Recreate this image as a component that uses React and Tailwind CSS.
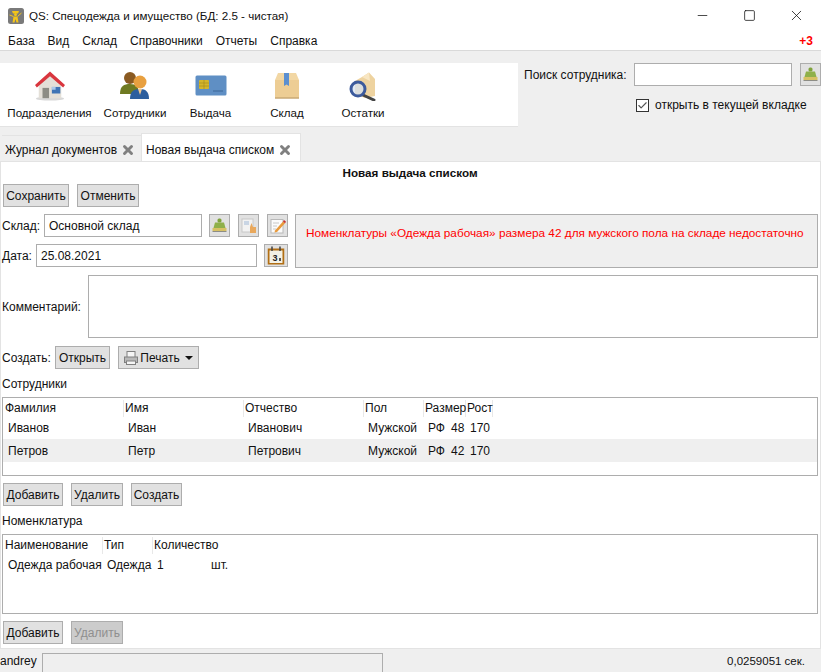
import { X, Minus, Square, Check } from 'lucide-react';

function HouseIcon() {
    return (
        <svg width="32" height="30" viewBox="0 0 34 32">
            <ellipse cx="17" cy="29.5" rx="15" ry="2" fill="#d8d8d8" />
            <path d="M5 14 L17 3 L29 14 V29 H5 Z" fill="#e4e0d8" />
            <path d="M1 15 L17 0.5 L33 15 L31 17.5 L17 5.5 L3 17.5 Z" fill="#d9363e" />
            <rect x="9" y="18" width="7" height="11" fill="#8c8c84" />
            <rect x="19" y="17" width="9" height="7" fill="#3f74b5" />
            <rect x="19" y="17" width="4" height="3" fill="#a9c8ea" />
        </svg>
    );
}

function PeopleIcon() {
    return (
        <svg width="30" height="30" viewBox="0 0 30 30">
            <path d="M0 23 C0 15 4 13 10 13 C16 13 19 16 19 23 Z" fill="#6f7a22" />
            <circle cx="10" cy="7" r="6" fill="#8a5a22" />
            <path d="M10 28 C10 20 14 18 20 18 C26 18 29 21 29 28 Z" fill="#2d5f9e" />
            <path d="M18 18 L20 24 L22 18 Z" fill="#f0c890" />
            <circle cx="20" cy="11" r="6.5" fill="#e8a040" />
        </svg>
    );
}

function CardIcon() {
    return (
        <svg width="32" height="22" viewBox="0 0 32 22">
            <rect x="0.5" y="0.5" width="31" height="20" rx="1.5" fill="#5f8fc4" />
            <rect x="4" y="5" width="10" height="9" rx="1" fill="#d4b62a" />
            <path d="M4 8 H14 M4 11 H14 M9 5 V14" stroke="#a78c1e" strokeWidth="0.7" />
            <path d="M18 16 H28" stroke="#3d6797" strokeWidth="1" />
        </svg>
    );
}

function BoxIcon() {
    return (
        <svg width="26" height="28" viewBox="0 0 26 28">
            <path d="M1 8 L4 1 H22 L25 8 V26 H1 Z" fill="#f2d7a4" />
            <path d="M1 8 H25 V26 H1 Z" fill="#edcd94" />
            <path d="M1 26 H25" stroke="#c9a875" strokeWidth="1.5" />
            <path d="M10 1 H15 V14 L12.5 12.5 L10 14 Z" fill="#5b8fd0" />
        </svg>
    );
}

function StockIcon() {
    return (
        <svg width="28" height="29" viewBox="0 0 28 29">
            <path d="M6 9 L13 5 L20 0.5 L26 7 V24 L16 26 L6 22 Z" fill="#eed3a0" />
            <path d="M13 5 L20 0.5 L21 9 Z" fill="#f8e6c2" />
            <path d="M14 23 L25 28" stroke="#444" strokeWidth="3" strokeLinecap="round" />
            <circle cx="9" cy="17" r="7" fill="#d5e2f2" fillOpacity="0.75" stroke="#3c5a9c" strokeWidth="3" />
        </svg>
    );
}

function BroomIcon() {
    return (
        <svg width="15" height="15" viewBox="0 0 15 15">
            <rect x="5.5" y="0.5" width="4" height="4" rx="1.5" fill="#7fa33c" />
            <path d="M3 4.5 H12 L13.5 10 H1.5 Z" fill="#8fb04a" />
            <rect x="0.5" y="10" width="14" height="3" fill="#d7c165" />
            <rect x="0.5" y="13" width="14" height="1" fill="#8d8d86" />
        </svg>
    );
}

function PickIcon() {
    return (
        <svg width="16" height="16" viewBox="0 0 16 16">
            <rect x="1" y="1" width="11" height="13" fill="#f2f2f2" stroke="#c8c8c8" />
            <rect x="3" y="3" width="5" height="4" fill="#c9d5e4" />
            <path d="M9 15 V9 L10.5 5 L12 9 H15 V15 Z" fill="#e9a85c" />
        </svg>
    );
}

function EditIcon() {
    return (
        <svg width="16" height="16" viewBox="0 0 16 16">
            <rect x="1" y="1.5" width="12" height="13.5" fill="#fbfbfb" stroke="#b9b9b9" />
            <path d="M3 5 H9 M3 8 H7 M3 11 H6" stroke="#c8c8c8" />
            <path d="M5 12.5 L13 3.5 L15 5.2 L7 14 L4.5 14.5 Z" fill="#e89a3c" />
            <path d="M13 3.5 L14 2 L16 3.8 L15 5.2 Z" fill="#c9302c" />
        </svg>
    );
}

function CalendarIcon() {
    return (
        <svg width="18" height="19" viewBox="0 0 18 19">
            <rect x="0.75" y="2.5" width="16.5" height="16" fill="#b26f14" />
            <rect x="2.5" y="4.5" width="13" height="12.5" fill="#f3f1e6" />
            <path d="M5 0.5 V5 M13 0.5 V5" stroke="#444" strokeWidth="1.5" />
            <text x="5.5" y="14.5" fontSize="9" fontWeight="700" fontFamily="'Liberation Sans', sans-serif" fill="#222">3</text>
            <rect x="12" y="12" width="2" height="3" fill="#555" />
        </svg>
    );
}

function PrinterIcon() {
    return (
        <svg width="14" height="14" viewBox="0 0 14 14">
            <rect x="3" y="0.5" width="8" height="6" fill="#f5f5f5" stroke="#808080" />
            <rect x="0.5" y="6" width="13" height="5.5" fill="#b8b8b8" stroke="#808080" />
            <rect x="2.5" y="10" width="9" height="3.5" fill="#f5f5f5" stroke="#808080" />
        </svg>
    );
}

function AppIcon() {
    return (
        <svg width="16" height="16" viewBox="0 0 16 16">
            <rect width="16" height="16" rx="2.5" fill="#7a7a7a" />
            <path d="M4 3 H11 L10 5.5 H5 Z" fill="#f4c518" />
            <circle cx="7.5" cy="6.5" r="1.5" fill="#f4c518" />
            <path d="M5.5 8.5 H9.5 L10.5 14.5 H8.5 L7.5 11 L6.5 14.5 H4.5 Z" fill="#f4c518" />
            <path d="M1.5 7 L5.5 8.5 M13.5 5 L9.5 8.5" stroke="#f4c518" />
        </svg>
    );
}

function Btn({ className = '', disabled, children }) {
    return (
        <button className={`flex h-[23px] items-center justify-center border border-[#adadad] ${disabled ? 'bg-[#cccccc] text-[#8f8f8f]' : 'bg-[#e1e1e1] text-[#111]'} ${className}`}>
            {children}
        </button>
    );
}

function IconBtn({ className = '', children }) {
    return (
        <button className={`flex h-[23px] items-center justify-center border border-[#adadad] bg-[#e1e1e1] ${className}`}>
            {children}
        </button>
    );
}

function Field({ className = '', value }) {
    return (
        <div className={`flex h-[23px] items-center border border-[#adadad] bg-white pl-1 ${className}`}>
            {value}
        </div>
    );
}

function NavItem({ width, icon, label }) {
    return (
        <div className={`flex flex-col items-center ${width}`}>
            <div className="flex h-[38px] items-center justify-center pt-[8px]">{icon}</div>
            <div className="mt-[4px] text-[11.6px] leading-[16px] whitespace-nowrap">{label}</div>
        </div>
    );
}

function Tab({ active, label, className = '' }) {
    return (
        <div className={`flex items-center whitespace-nowrap ${active ? 'h-[29px] border-x border-t border-[#e3e3e3] bg-white pl-[4px] pt-[3px]' : 'h-[26px] border-t border-[#e3e3e3] pl-[3px] pt-[2px]'} ${className}`}>
            <span>{label}</span>
            <X size={14} strokeWidth={5} className="ml-[4px] text-[#808080]" />
        </div>
    );
}

const employees = [
    { last: 'Иванов', first: 'Иван', middle: 'Иванович', size: '48', bg: '' },
    { last: 'Петров', first: 'Петр', middle: 'Петрович', size: '42', bg: 'bg-[#efefef]' },
];

function HeadCell({ width, label }) {
    return (
        <div className={`h-[17px] border-r border-[#e8e8e8] pl-[1px] leading-[17px] whitespace-nowrap ${width}`}>
            {label}
        </div>
    );
}

export default function App() {
    return (
        <div className="flex h-[672px] w-[821px] flex-col overflow-hidden bg-[#efefef] text-[12px] text-[#111] font-['Liberation_Sans',Arial,sans-serif]">
            {/* title bar */}
            <div className="flex h-[31px] shrink-0 items-center bg-white pl-2">
                <AppIcon />
                <span className="ml-[5px] text-[11.6px] text-[#111]">QS: Спецодежда и имущество (БД: 2.5 - чистая)</span>
                <div className="ml-auto flex items-center text-[#111]">
                    <Minus size={15} strokeWidth={1.2} className="mr-[33px]" />
                    <Square size={13} strokeWidth={1.4} className="mr-[32px]" />
                    <X size={17} strokeWidth={1.1} className="mr-[16px]" />
                </div>
            </div>

            {/* menu */}
            <div className="flex h-[20px] shrink-0 items-center gap-[13px] border-b border-[#d9d9d9] bg-white pl-2 pr-[8px]">
                <span>База</span>
                <span>Вид</span>
                <span>Склад</span>
                <span>Справочники</span>
                <span>Отчеты</span>
                <span>Справка</span>
                <span className="ml-auto font-bold text-[#ff0000]">+3</span>
            </div>

            {/* toolbar */}
            <div className="flex h-[76px] shrink-0 pt-[12px]">
                <div className="flex h-[64px] w-[518px] border-b border-[#e3e3e3] bg-white pl-[5px]">
                    <NavItem width="w-[89px]" icon={<HouseIcon />} label="Подразделения" />
                    <NavItem width="w-[82px]" icon={<PeopleIcon />} label="Сотрудники" />
                    <NavItem width="w-[69px]" icon={<CardIcon />} label="Выдача" />
                    <NavItem width="w-[84px]" icon={<BoxIcon />} label="Склад" />
                    <NavItem width="w-[68px]" icon={<StockIcon />} label="Остатки" />
                </div>
                <div className="ml-[6px] flex-1">
                    <div className="flex items-center">
                        <span className="w-[110px] whitespace-nowrap">Поиск сотрудника:</span>
                        <Field className="w-[158px]" value="" />
                        <IconBtn className="ml-[8px] w-[21px]"><BroomIcon /></IconBtn>
                    </div>
                    <div className="ml-[112px] mt-[10px] flex items-center">
                        <div className="flex h-[13px] w-[13px] items-center justify-center border border-[#333] bg-white">
                            <Check size={11} strokeWidth={2.5} className="text-[#555]" />
                        </div>
                        <span className="ml-[6px] whitespace-nowrap">открыть в текущей вкладке</span>
                    </div>
                </div>
            </div>

            {/* tabs */}
            <div className="flex h-[34px] shrink-0 items-end pl-[2px]">
                <Tab label="Журнал документов" className="w-[139px]" />
                <Tab active label="Новая выдача списком" className="-mb-[1px] w-[160px]" />
            </div>

            {/* tab page */}
            <div className="flex h-[487px] shrink-0 flex-col border border-b-0 border-[#e3e3e3] bg-white pl-[1px] pr-[2px]">
                <div className="h-[22px] pt-[2px] text-center text-[11.7px] font-bold leading-[18px]">Новая выдача списком</div>
                <div className="ml-[1px] flex gap-[8px]">
                    <Btn className="w-[66px]">Сохранить</Btn>
                    <Btn className="w-[62px]">Отменить</Btn>
                </div>

                <div className="mt-[7px] flex">
                    <div className="w-[293px] shrink-0">
                        <div className="flex items-center">
                            <span className="w-[42px]">Склад:</span>
                            <Field className="w-[158px]" value="Основной склад" />
                            <IconBtn className="ml-[7px] w-[21px]"><BroomIcon /></IconBtn>
                            <IconBtn className="ml-[8px] w-[21px]"><PickIcon /></IconBtn>
                            <IconBtn className="ml-[8px] w-[21px]"><EditIcon /></IconBtn>
                        </div>
                        <div className="mt-[7px] flex items-center">
                            <span className="w-[34px]">Дата:</span>
                            <Field className="w-[221px]" value="25.08.2021" />
                            <IconBtn className="ml-[7px] w-[24px]"><CalendarIcon /></IconBtn>
                        </div>
                    </div>
                    <div className="flex h-[54px] flex-1 items-center border border-[#adadad] bg-[#efefef] pb-[14px] pl-[10px] text-[11.8px] text-[#ff0000] whitespace-nowrap">
                        Номенклатуры «Одежда рабочая» размера 42 для мужского пола на складе недостаточно
                    </div>
                </div>

                <div className="mt-[7px] flex items-center">
                    <span className="w-[86px] shrink-0">Комментарий:</span>
                    <div className="h-[63px] flex-1 border border-[#adadad] bg-white" />
                </div>

                <div className="mt-[8px] flex items-center">
                    <span className="w-[53px]">Создать:</span>
                    <Btn className="w-[55px]">Открыть</Btn>
                    <Btn className="ml-[8px] w-[81px]">
                        <PrinterIcon />
                        <span className="ml-[2px]">Печать</span>
                        <span className="ml-[5px] h-0 w-0 border-x-[4px] border-t-[4px] border-x-transparent border-t-[#111]" />
                    </Btn>
                </div>

                <div className="mt-[7px] h-[16px] leading-[16px]">Сотрудники</div>
                <div className="mt-[5px] h-[79px] border border-[#adadad] bg-white">
                    <div className="flex h-[18px] items-start pl-[1px] pt-[2px]">
                        <HeadCell width="w-[120px]" label="Фамилия" />
                        <HeadCell width="w-[120px]" label="Имя" />
                        <HeadCell width="w-[120px]" label="Отчество" />
                        <HeadCell width="w-[60px]" label="Пол" />
                        <HeadCell width="w-[42px]" label="Размер" />
                        <HeadCell width="w-[27px]" label="Рост" />
                    </div>
                    {employees.map((e) => (
                        <div key={e.last} className={`flex h-[23px] items-center pl-[1px] ${e.bg}`}>
                            <div className="w-[120px] pl-[4px]">{e.last}</div>
                            <div className="w-[120px] pl-[4px]">{e.first}</div>
                            <div className="w-[120px] pl-[4px]">{e.middle}</div>
                            <div className="w-[60px] pl-[4px] whitespace-nowrap">Мужской</div>
                            <div className="flex w-[42px] pl-[4px]"><span>РФ</span><span className="ml-[6px]">{e.size}</span></div>
                            <div className="w-[27px] pl-[4px]">170</div>
                        </div>
                    ))}
                </div>

                <div className="ml-[1px] mt-[7px] flex gap-[8px]">
                    <Btn className="w-[60px]">Добавить</Btn>
                    <Btn className="w-[52px]">Удалить</Btn>
                    <Btn className="w-[51px]">Создать</Btn>
                </div>

                <div className="mt-[7px] h-[16px] leading-[16px]">Номенклатура</div>
                <div className="mt-[5px] h-[80px] border border-[#adadad] bg-white">
                    <div className="flex h-[18px] items-start pl-[1px] pt-[2px]">
                        <HeadCell width="w-[99px]" label="Наименование" />
                        <HeadCell width="w-[50px]" label="Тип" />
                        <div className="h-[17px] pl-[1px] leading-[17px]">Количество</div>
                    </div>
                    <div className="flex h-[24px] items-center pl-[1px]">
                        <div className="w-[99px] pl-[4px] whitespace-nowrap">Одежда рабочая</div>
                        <div className="w-[50px] pl-[4px]">Одежда</div>
                        <div className="w-[58px] pl-[4px]">1</div>
                        <div>шт.</div>
                    </div>
                </div>

                <div className="ml-[1px] mt-[7px] flex gap-[8px]">
                    <Btn className="w-[60px]">Добавить</Btn>
                    <Btn disabled className="w-[52px]">Удалить</Btn>
                </div>
            </div>

            {/* status bar */}
            <div className="flex flex-1 items-end border-t border-[#e3e3e3]">
                <span className="mb-[2px] w-[42px] shrink-0">andrey</span>
                <div className="h-[19px] w-[341px] border-x border-t border-[#adadad] bg-[#efefef]" />
                <span className="mb-[2px] ml-auto mr-[16px] text-[11.5px]">0,0259051 сек.</span>
            </div>
        </div>
    );
}
